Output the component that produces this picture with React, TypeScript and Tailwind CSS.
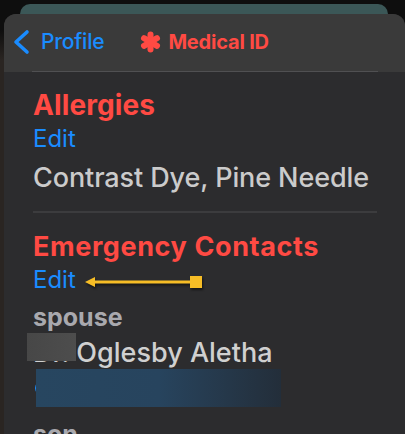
function Asterisk() {
    return (
        <svg width="23" height="22" viewBox="0 0 22 22" className="shrink-0">
            <g stroke="#ff4a43" strokeWidth="6" strokeLinecap="round">
                <line x1="11" y1="3.5" x2="11" y2="18.5" />
                <line x1="4.5" y1="7.2" x2="17.5" y2="14.8" />
                <line x1="17.5" y1="7.2" x2="4.5" y2="14.8" />
            </g>
        </svg>
    );
}

function Chevron() {
    return (
        <svg width="20" height="26" viewBox="0 0 20 26" className="shrink-0 ml-[8px]">
            <polyline points="15,3 4,13 15,23" fill="none" stroke="#1a8cff" strokeWidth="3.6" strokeLinecap="round" strokeLinejoin="round" />
        </svg>
    );
}

function Arrow() {
    return (
        <svg width="124" height="16" viewBox="0 0 124 16" className="ml-[9px] mt-[3px] drop-shadow-[1px_2px_1px_rgba(0,0,0,0.5)]">
            <line x1="8" y1="8" x2="112" y2="8" stroke="#f6bd26" strokeWidth="3" />
            <polygon points="0,8 10,3 10,13" fill="#f6bd26" />
            <rect x="105" y="2" width="12" height="12" fill="#f6bd26" />
        </svg>
    );
}

export default function App() {
    return (
        <div
            className="w-[405px] h-[434px] overflow-hidden bg-[linear-gradient(to_bottom,#0e0e0e_0px,#0e0e0e_30px,#2a2522_60px,#2a2522_100%)] flex flex-col"
            style={{ fontFamily: "Inter, 'Noto Sans', sans-serif" }}
        >
            {/* card behind */}
            <div className="ml-[20px] mr-[17px] mt-[4px] h-[14px] shrink-0 rounded-t-[10px] bg-[#3b5757]" />

            {/* sheet */}
            <div className="-mt-[4px] ml-[4px] flex-1 flex flex-col rounded-t-[12px] bg-[#2c2c2e] overflow-hidden">
                <div className="h-[58px] shrink-0 bg-[#3a3a3a] flex flex-col">
                    <div className="flex-1 flex items-center pb-[2px]">
                        <Chevron />
                        <span className="ml-[9px] text-[21px] leading-[28px] font-medium text-[#1a8cff] tracking-[-0.2px]">Profile</span>
                        <div className="flex items-center ml-[35px] gap-[6px] text-[#ff4a43]">
                            <Asterisk />
                            <span className="text-[20px] leading-[28px] font-bold tracking-[-0.2px]">Medical ID</span>
                        </div>
                    </div>
                    <div className="ml-[28px] mr-[27px] h-px bg-[#505052]" />
                </div>

                <div className="pl-[29px] pr-[28px] flex flex-col">
                    <h2 className="mt-[17px] text-[28px] leading-[32px] font-bold text-[#ff4a43] tracking-[0.1px]">Allergies</h2>
                    <div className="mt-[4px] text-[24px] leading-[28px] text-[#1a8cff]">Edit</div>
                    <p className="mt-[9px] text-[27px] leading-[32px] font-medium text-[#cbcbcb] tracking-[-0.1px] whitespace-nowrap">Contrast Dye, Pine Needle</p>
                    <div className="mt-[17px] h-[2px] bg-[#3c3c3e]" />

                    <h2 className="mt-[19px] text-[27px] leading-[30px] font-bold text-[#ff4a43] tracking-[0.6px] whitespace-nowrap">Emergency Contacts</h2>
                    <div className="mt-[4px] flex items-center">
                        <span className="text-[24px] leading-[28px] text-[#1a8cff]">Edit</span>
                        <Arrow />
                    </div>
                    <div className="mt-[9px] text-[25px] leading-[28px] font-bold text-[#a9a9ae]">spouse</div>
                    <div className="relative mt-[7px] h-[30px]">
                        <span className="text-[27px] leading-[30px] font-medium text-[#d0d0d0] whitespace-nowrap">Dr. Oglesby Aletha</span>
                        <div className="absolute -left-[6px] -top-[5px] w-[49px] h-[28px] bg-gradient-to-r from-[#474747] to-[#4d4d4d]" />
                    </div>
                    <div className="relative mt-[1px] h-[38px] shrink-0">
                        <div className="absolute left-[2px] top-[12px] w-[8px] h-[14px] rounded-l-full border-l-2 border-[#1a8cff]" />
                        <div className="absolute left-[3px] top-0 w-[245px] h-[38px] bg-gradient-to-r from-[#274660] via-[#27445e] to-[#232e3a]" />
                    </div>
                    <div className="mt-[13px] text-[25px] leading-[28px] font-bold text-[#a9a9ae]">son</div>
                </div>
            </div>
        </div>
    );
}
